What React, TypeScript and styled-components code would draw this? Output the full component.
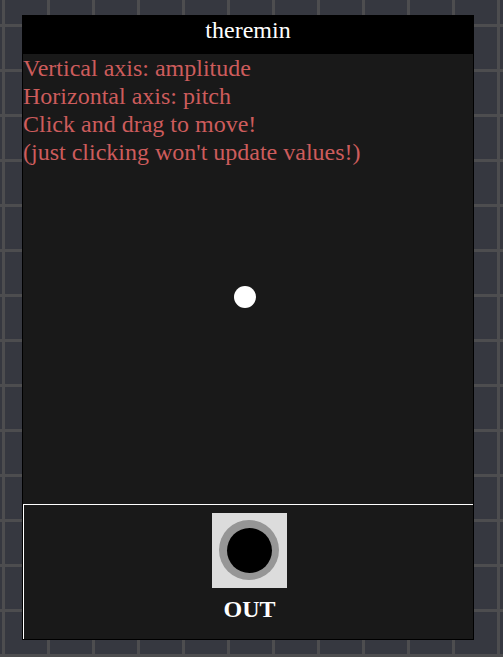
import React, { useRef, useState } from "react";
import styled, { createGlobalStyle } from "styled-components";

const GlobalStyle = createGlobalStyle`
  html {
    min-height: 100%;
    background-color: #363840;
    background-image:
      linear-gradient(#4d4d4f 3px, transparent 3px),
      linear-gradient(90deg, #4d4d4f 3px, transparent 3px);
    background-size: 45px 45px;
    background-position: 2px 24px;
  }
  body {
    margin: 0;
    font-family: "Liberation Serif", "Times New Roman", serif;
    font-size: 24px;
    line-height: 28px;
  }
`;

const Workspace = styled.main`
  padding: 15px 29px 16px 22px;
`;

const Module = styled.section`
  border: 1px solid #000;
  background: #191919;
  color: #fff;
`;

const TitleBar = styled.header`
  height: 38px;
  background: #000;
  text-align: center;
`;

const Title = styled.h1`
  margin: 0;
  font-size: 24px;
  font-weight: 400;
`;

const Pad = styled.div`
  position: relative;
  aspect-ratio: 1;
  color: #cd5c5c;
  user-select: none;
  touch-action: none;
`;

const HelpLine = styled.p`
  margin: 0;
`;

const Handle = styled.button`
  position: absolute;
  width: 22px;
  height: 22px;
  margin: -11px 0 0 -11px;
  padding: 0;
  border: 0;
  border-radius: 50%;
  background: #fff;
  cursor: grab;
`;

const Outputs = styled.footer`
  display: flex;
  justify-content: center;
  border-top: 1px solid #fff;
  border-left: 1px solid #fff;
  padding: 8px 0 16px 2px;
`;

const Output = styled.div`
  display: flex;
  flex-direction: column;
  align-items: center;
  gap: 7px;
`;

const Jack = styled.button`
  display: grid;
  place-items: center;
  width: 75px;
  height: 75px;
  padding: 0;
  border: 0;
  background: #dcdcdc;
`;

const Socket = styled.svg`
  display: block;
  width: 61px;
  height: 61px;
`;

const JackLabel = styled.span`
  font-weight: 700;
`;

const help = [
  "Vertical axis: amplitude",
  "Horizontal axis: pitch",
  "Click and drag to move!",
  "(just clicking won't update values!)",
];

const clamp = (value: number) => Math.min(1, Math.max(0, value));

export default function App() {
  const pad = useRef<HTMLDivElement>(null);
  const [point, setPoint] = useState({ x: 0.493, y: 0.54 });

  const drag = (event: React.PointerEvent) => {
    if (event.buttons !== 1 || !pad.current) return;
    const box = pad.current.getBoundingClientRect();
    setPoint({
      x: clamp((event.clientX - box.left) / box.width),
      y: clamp((event.clientY - box.top) / box.height),
    });
  };

  return (
    <>
      <GlobalStyle />
      <Workspace>
        <Module>
          <TitleBar>
            <Title>theremin</Title>
          </TitleBar>
          <Pad ref={pad} onPointerMove={drag}>
            {help.map((line) => (
              <HelpLine key={line}>{line}</HelpLine>
            ))}
            <Handle
              type="button"
              aria-label="Pitch and amplitude"
              style={{ left: `${point.x * 100}%`, top: `${point.y * 100}%` }}
            />
          </Pad>
          <Outputs>
            <Output>
              <Jack type="button" aria-labelledby="out-label">
                <Socket viewBox="0 0 61 61" aria-hidden="true">
                  <circle cx="30" cy="30" r="30" fill="#969696" />
                  <circle cx="30.5" cy="30.5" r="22.5" fill="#000" />
                </Socket>
              </Jack>
              <JackLabel id="out-label">OUT</JackLabel>
            </Output>
          </Outputs>
        </Module>
      </Workspace>
    </>
  );
}
